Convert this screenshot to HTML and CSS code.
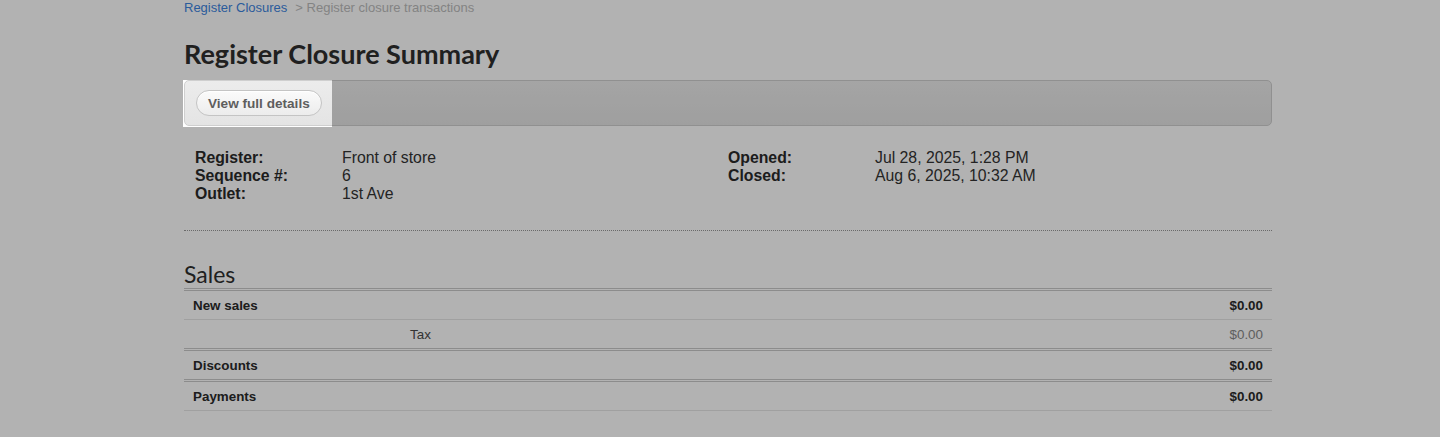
FILE: index.html
```html
<!DOCTYPE html>
<html lang="en">
<head>
<meta charset="utf-8">
<title>Register Closure Summary</title>
<link rel="stylesheet" href="styles.css">
</head>
<body>
<div class="page">
  <div class="breadcrumb"><a href="#" class="crumb-link">Register Closures</a><span class="crumb-sep">&gt; Register closure transactions</span></div>
  <h1 class="title">Register Closure Summary</h1>
  <div class="toolbar">
    <button class="btn" type="button">View full details</button>
  </div>
  <div class="info">
    <dl class="info-col">
      <dt>Register:</dt><dd>Front of store</dd>
      <dt>Sequence #:</dt><dd>6</dd>
      <dt>Outlet:</dt><dd>1st Ave</dd>
    </dl>
    <dl class="info-col">
      <dt>Opened:</dt><dd>Jul 28, 2025, 1:28 PM</dd>
      <dt>Closed:</dt><dd>Aug 6, 2025, 10:32 AM</dd>
    </dl>
  </div>
  <h2 class="section-title">Sales</h2>
  <div class="summary">
    <div class="row row-main"><span class="label">New sales</span><span class="amount">$0.00</span></div>
    <div class="row row-sub"><span class="sub-label">Tax</span><span class="amount">$0.00</span></div>
    <div class="row row-main row-group"><span class="label">Discounts</span><span class="amount">$0.00</span></div>
    <div class="row row-main row-group row-last"><span class="label">Payments</span><span class="amount">$0.00</span></div>
  </div>
</div>
<div class="spotlight"></div>
</body>
</html>
```

FILE: styles.css
```css
html, body {
  margin: 0;
  padding: 0;
  background: #fff;
  overflow: hidden;
}
body {
  font-family: "Liberation Sans", Arial, sans-serif;
  font-size: 14px;
  color: #333;
  height: 437px;
  position: relative;
}
.page {
  width: 1088px;
  padding-left: 184px;
}
.breadcrumb {
  font-size: 13px;
  line-height: 16px;
  height: 16px;
}
.crumb-link {
  color: #3d84e0;
  text-decoration: none;
}
.crumb-sep {
  color: #bcbcbc;
  margin-left: 8px;
}
.title {
  font-family: Lato, "Liberation Sans", sans-serif;
  font-weight: 700;
  font-size: 27px;
  line-height: 32px;
  margin: 22px 0 10px;
  color: #2e2e2e;
}
.toolbar {
  box-sizing: border-box;
  height: 46px;
  border: 1px solid #cfcfcf;
  border-radius: 5px;
  background: linear-gradient(#ececec, #e4e4e4);
  padding: 8px 11px;
  display: flex;
  align-items: center;
}
.btn {
  font-family: "Liberation Sans", Arial, sans-serif;
  font-weight: 700;
  font-size: 13.6px;
  color: #5e5e5e;
  height: 26px;
  padding: 0 11px;
  border: 1px solid #c4c4c4;
  border-radius: 13px;
  background: linear-gradient(#fbfbfb, #ececec);
  box-shadow: inset 0 1px 0 #fff;
}
.info {
  display: grid;
  grid-template-columns: 533px 1fr;
  align-items: start;
  padding: 23px 11px 27px;
  border-bottom: 1px dotted #999;
}
.info-col {
  display: grid;
  grid-template-columns: 147px 1fr;
  align-content: start;
  margin: 0;
  line-height: 18px;
  font-size: 15.8px;
}
.info-col dt {
  font-weight: 700;
  color: #2a2a2a;
}
.info-col dd {
  margin: 0;
  color: #333;
}
.section-title {
  font-family: Lato, "Liberation Sans", sans-serif;
  font-weight: 400;
  font-size: 23px;
  line-height: 26px;
  margin: 30px 0 1px;
  color: #2e2e2e;
}
.summary {
  border-top: 3px double #c9c9c9;
}
.row {
  display: flex;
  justify-content: space-between;
  align-items: center;
  height: 28px;
  padding: 0 9px;
  font-size: 13.4px;
}
.row-main {
  font-weight: 700;
  color: #2a2a2a;
}
.row-sub {
  border-top: 1px solid #e6e6e6;
  color: #888;
}
.sub-label {
  color: #4a4a4a;
  padding-left: 217px;
}
.row-group {
  border-top: 3px double #c9c9c9;
}
.row-last {
  border-bottom: 1px solid #e6e6e6;
}
.spotlight {
  position: absolute;
  left: 183px;
  top: 80px;
  width: 149px;
  height: 47px;
  box-shadow: 0 0 0 3000px rgba(0, 0, 0, 0.3);
  pointer-events: none;
}
```
